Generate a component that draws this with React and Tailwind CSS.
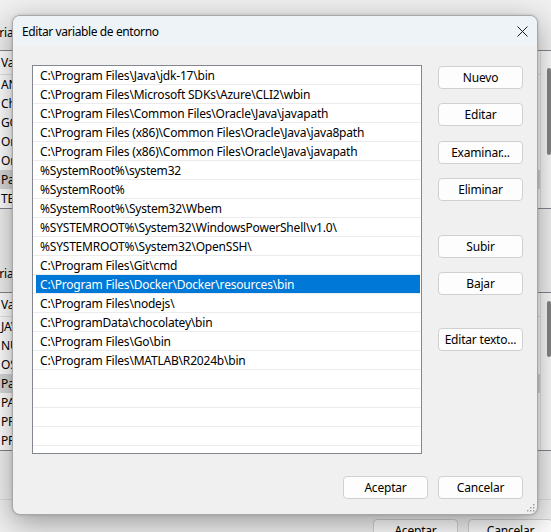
import React from "react";

const paths = [
  "C:\\Program Files\\Java\\jdk-17\\bin",
  "C:\\Program Files\\Microsoft SDKs\\Azure\\CLI2\\wbin",
  "C:\\Program Files\\Common Files\\Oracle\\Java\\javapath",
  "C:\\Program Files (x86)\\Common Files\\Oracle\\Java\\java8path",
  "C:\\Program Files (x86)\\Common Files\\Oracle\\Java\\javapath",
  "%SystemRoot%\\system32",
  "%SystemRoot%",
  "%SystemRoot%\\System32\\Wbem",
  "%SYSTEMROOT%\\System32\\WindowsPowerShell\\v1.0\\",
  "%SYSTEMROOT%\\System32\\OpenSSH\\",
  "C:\\Program Files\\Git\\cmd",
  "C:\\Program Files\\Docker\\Docker\\resources\\bin",
  "C:\\Program Files\\nodejs\\",
  "C:\\ProgramData\\chocolatey\\bin",
  "C:\\Program Files\\Go\\bin",
  "C:\\Program Files\\MATLAB\\R2024b\\bin",
];

const userVars = [
  "ANDROID_HOME",
  "ChocolateyLastPathUpdate",
  "GOPATH",
  "OneDrive",
  "OneDriveConsumer",
  "Path",
  "TEMP",
];

const sysVars = [
  "JAVA_HOME",
  "NUMBER_OF_PROCESSORS",
  "OS",
  "Path",
  "PATHEXT",
  "PROCESSOR_ARCHITECTURE",
  "PROCESSOR_IDENTIFIER",
];

function WinButton({ children, className = "" }) {
  return (
    <div
      className={
        "h-[23px] w-[85px] shrink-0 rounded-[4px] border border-[#d0d0d0] bg-[#fdfdfd] text-[12px] tracking-[-0.2px] text-black flex items-center justify-center leading-none pt-[1px] " +
        className
      }
    >
      {children}
    </div>
  );
}

function BackList({ items, thumbTop, thumbH }) {
  return (
    <div className="ml-[-2px] w-[556px] border border-[#828790] bg-white flex">
      <div className="flex-1 flex flex-col">
        <div className="h-[24px] border-b border-[#e5e5e5] pl-[2px] flex items-center text-[12px] tracking-[-0.2px]">
          Variable
        </div>
        {items.map((v, i) => (
          <div
            key={i}
            className={
              "h-[19px] pl-[2px] flex items-center text-[12px] tracking-[-0.2px] " +
              (v === "Path" ? "bg-[#d9d9d9]" : "")
            }
          >
            {v}
          </div>
        ))}
      </div>
      <div className="w-[13px] border-l border-[#e3e3e3] bg-[#fafafa] flex flex-col">
        <div
          className="ml-[6px] w-[4px] rounded-[2px] bg-[#858585]"
          style={{ marginTop: thumbTop, height: thumbH }}
        />
      </div>
    </div>
  );
}

export default function App() {
  return (
    <div className="relative w-[551px] h-[532px] overflow-hidden bg-[#f0f0f0] text-black font-['Noto_Sans',sans-serif]">
      {/* Background window: Variables de entorno */}
      <div className="flex flex-col pt-[25px]">
        <div className="h-[16px] leading-[16px] text-[12px] tracking-[-0.2px] ml-[-14px] whitespace-nowrap">
          Variables de usuario para Usuario
        </div>
        <div className="mt-[9px]">
          <BackList items={userVars} thumbTop={17} thumbH={87} />
        </div>
        <div className="mt-[57px] h-[16px] leading-[16px] text-[12px] tracking-[-0.2px] ml-[-14px] whitespace-nowrap">
          Variables del sistema
        </div>
        <div className="mt-[10px]">
          <BackList items={sysVars} thumbTop={8} thumbH={56} />
        </div>
        <div className="mt-[48px] h-px bg-[#dcdcdc]" />
        <div className="mt-[19px] flex justify-end gap-[10px] mr-[-2px]">
          <WinButton>Aceptar</WinButton>
          <WinButton>Cancelar</WinButton>
        </div>
      </div>

      {/* Dialog window */}
      <div className="absolute left-[12px] top-[15px] w-[526px] h-[500px] rounded-[8px] border border-[#a8a8a8] overflow-hidden flex flex-col bg-[#f0f0f0] shadow-[0_8px_30px_rgba(0,0,0,0.36),0_0_3px_rgba(0,0,0,0.18)]">
        <div className="h-[30px] shrink-0 bg-[#eef3f8] flex items-center justify-between pl-[9px] pr-[9px]">
          <span className="text-[12px] tracking-[-0.4px] leading-none pt-[1px]">
            Editar variable de entorno
          </span>
          <svg width="11" height="11" viewBox="0 0 11 11">
            <path d="M0.5 0.5 L10.5 10.5 M10.5 0.5 L0.5 10.5" stroke="#1b1b1b" strokeWidth="1" />
          </svg>
        </div>
        <div className="flex-1 flex flex-col pl-[19px] pr-[14px] pt-[19px]">
          <div className="flex">
            <div className="w-[390px] h-[389px] border border-[#828790] bg-white overflow-hidden flex flex-col">
              {Array.from({ length: 21 }).map((_, i) => {
                const text = paths[i] || "";
                const sel = i === 11;
                return (
                  <div key={i} className="h-[19px] shrink-0 border-b border-[#ebebeb] flex">
                    <div
                      className={
                        "flex-1 ml-[3px] mr-[1px] pl-[4px] pt-[1px] flex items-center whitespace-nowrap text-[12px] tracking-[-0.2px] " +
                        (sel ? "bg-[#0078d7] text-white" : "text-black")
                      }
                    >
                      {text}
                    </div>
                  </div>
                );
              })}
            </div>
            <div className="ml-[16px] pt-[1px] flex flex-col">
              <WinButton>Nuevo</WinButton>
              <WinButton className="mt-[14px]">Editar</WinButton>
              <WinButton className="mt-[15px]">Examinar...</WinButton>
              <WinButton className="mt-[14px]">Eliminar</WinButton>
              <WinButton className="mt-[34px]">Subir</WinButton>
              <WinButton className="mt-[14px]">Bajar</WinButton>
              <WinButton className="mt-[33px]">Editar texto...</WinButton>
            </div>
          </div>
          <div className="mt-[22px] flex justify-end gap-[10px]">
            <WinButton>Aceptar</WinButton>
            <WinButton>Cancelar</WinButton>
          </div>
        </div>
        <svg className="absolute right-[2px] bottom-[2px]" width="9" height="9" viewBox="0 0 9 9">
          <rect x="7" y="1" width="1.5" height="1.5" fill="#a0a0a0" />
          <rect x="4" y="4" width="1.5" height="1.5" fill="#a0a0a0" />
          <rect x="7" y="4" width="1.5" height="1.5" fill="#a0a0a0" />
          <rect x="1" y="7" width="1.5" height="1.5" fill="#a0a0a0" />
          <rect x="4" y="7" width="1.5" height="1.5" fill="#a0a0a0" />
          <rect x="7" y="7" width="1.5" height="1.5" fill="#a0a0a0" />
        </svg>
      </div>
    </div>
  );
}
